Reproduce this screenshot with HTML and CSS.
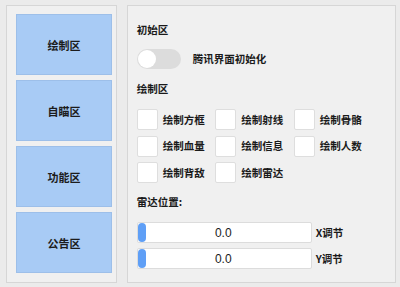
FILE: index.html
```html
<!DOCTYPE html>
<html lang="zh">
<head>
<meta charset="utf-8">
<link rel="stylesheet" href="styles.css">
</head>
<body>
<div class="app">
  <div class="side">
    <div class="nav-btn">绘制区</div>
    <div class="nav-btn">自瞄区</div>
    <div class="nav-btn">功能区</div>
    <div class="nav-btn">公告区</div>
  </div>
  <div class="main">
    <div class="title">初始区</div>
    <div class="toggle-row">
      <div class="toggle"><div class="knob"></div></div>
      <span class="label">腾讯界面初始化</span>
    </div>
    <div class="title t2">绘制区</div>
    <div class="checks">
      <div class="check"><div class="box"></div><span class="label">绘制方框</span></div>
      <div class="check"><div class="box"></div><span class="label">绘制射线</span></div>
      <div class="check"><div class="box"></div><span class="label">绘制骨骼</span></div>
      <div class="check"><div class="box"></div><span class="label">绘制血量</span></div>
      <div class="check"><div class="box"></div><span class="label">绘制信息</span></div>
      <div class="check"><div class="box"></div><span class="label">绘制人数</span></div>
      <div class="check"><div class="box"></div><span class="label">绘制背敌</span></div>
      <div class="check"><div class="box"></div><span class="label">绘制雷达</span></div>
    </div>
    <div class="title t3">雷达位置:</div>
    <div class="sliders">
      <div class="slider-row">
        <div class="track"><div class="handle"></div><span class="value">0.0</span></div>
        <span class="label">X调节</span>
      </div>
      <div class="slider-row">
        <div class="track"><div class="handle"></div><span class="value">0.0</span></div>
        <span class="label">Y调节</span>
      </div>
    </div>
  </div>
</div>
</body>
</html>
```
FILE: styles.css
```css
html, body {
  margin: 0;
  padding: 0;
  background: #ebebeb;
}
body {
  width: 400px;
  height: 287px;
  overflow: hidden;
  font-family: "Noto Sans CJK SC", "Noto Sans", sans-serif;
  color: #1a1a1a;
}
.app {
  display: flex;
  gap: 10px;
  padding: 5px 4px 0 6px;
}
.side {
  box-sizing: border-box;
  width: 111px;
  height: 278px;
  background: #f0f0f0;
  border: 1px solid #d6d6d6;
  padding: 8px 0 0 9px;
  display: flex;
  flex-direction: column;
  gap: 5px;
}
.nav-btn {
  box-sizing: border-box;
  width: 96px;
  height: 61px;
  background: #a8cbf5;
  border: 1px solid #9dbfe9;
  display: flex;
  align-items: center;
  justify-content: center;
  font-size: 11px;
  font-weight: bold;
  color: #1c1c1c;
}
.main {
  box-sizing: border-box;
  width: 270px;
  height: 278px;
  background: #f0f0f0;
  border: 1px solid #d6d6d6;
  padding: 16px 0 0 9px;
  display: flex;
  flex-direction: column;
}
.title {
  height: 16px;
  line-height: 16px;
  font-size: 10.5px;
  font-weight: bold;
}
.label {
  font-size: 10.5px;
  font-weight: bold;
  line-height: 16px;
}
.toggle-row {
  margin-top: 11px;
  display: flex;
  align-items: center;
  gap: 12px;
}
.toggle {
  box-sizing: border-box;
  width: 44px;
  height: 20px;
  border-radius: 10px;
  background: #dcdcdc;
  padding: 1px;
}
.knob {
  width: 18px;
  height: 18px;
  border-radius: 50%;
  background: #ffffff;
}
.t2 {
  margin-top: 12px;
}
.checks {
  margin-top: 12px;
  display: grid;
  grid-template-columns: 78.5px 78.5px 78.5px;
  row-gap: 5.5px;
}
.check {
  display: flex;
  align-items: center;
  gap: 5px;
  height: 21px;
}
.box {
  box-sizing: border-box;
  width: 21px;
  height: 21px;
  background: #ffffff;
  border: 1px solid #dedede;
  border-radius: 2px;
}
.t3 {
  margin-top: 11px;
}
.sliders {
  margin-top: 12px;
  display: flex;
  flex-direction: column;
  gap: 5px;
}
.slider-row {
  display: flex;
  align-items: center;
  gap: 4px;
}
.track {
  position: relative;
  box-sizing: border-box;
  width: 175px;
  height: 21px;
  background: #ffffff;
  border: 1px solid #dcdcdc;
  border-radius: 2px;
  display: flex;
  align-items: center;
  justify-content: center;
}
.handle {
  position: absolute;
  left: 0;
  top: 0;
  width: 8px;
  height: 19px;
  border-radius: 4px;
  background: #5f9ff6;
}
.value {
  font-family: "Liberation Sans", Arial, sans-serif;
  font-size: 12px;
  color: #1a1a1a;
  margin-right: 2px;
}
```
